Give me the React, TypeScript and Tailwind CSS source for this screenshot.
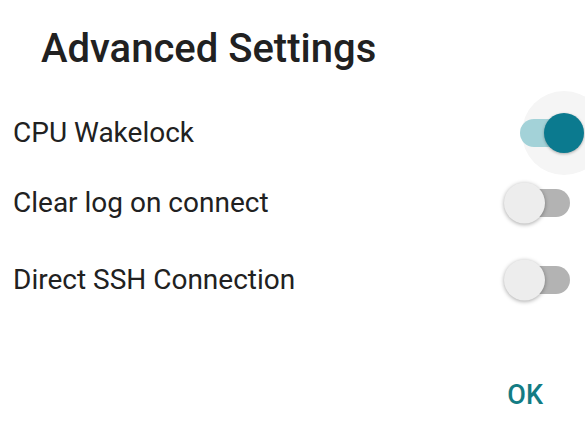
import { useState } from "react";

type SwitchProps = {
    checked: boolean;
    onChange: () => void;
};

const Switch: React.FC<SwitchProps> = ({ checked, onChange }) => {
    return (
        <button
            type="button"
            onClick={onChange}
            className="relative w-[50px] h-[28px] shrink-0"
        >
            {checked && (
                <div className="absolute left-[2px] top-1/2 -translate-y-1/2 w-[84px] h-[84px] rounded-full bg-[#f5f5f5]" />
            )}
            <div
                className={
                    checked
                        ? "absolute inset-0 rounded-full bg-[#a3d2d8]"
                        : "absolute inset-0 rounded-full bg-[#b3b3b3]"
                }
            />
            <div
                className={
                    checked
                        ? "absolute left-[24px] top-1/2 -translate-y-1/2 w-[40px] h-[40px] rounded-full bg-[#0b7a8f] shadow-[0_1px_3px_rgba(0,0,0,0.3)]"
                        : "absolute left-[-16px] top-1/2 -translate-y-1/2 w-[41px] h-[41px] rounded-full bg-[#ededed] shadow-[0_1px_4px_rgba(0,0,0,0.35)]"
                }
            />
        </button>
    );
};

export default function App() {
    const [cpu, setCpu] = useState(true);
    const [clearLog, setClearLog] = useState(false);
    const [directSsh, setDirectSsh] = useState(false);

    const rows = [
        { label: "CPU Wakelock", value: cpu, toggle: () => setCpu(!cpu), cls: "h-[68px] mt-[31px]" },
        { label: "Clear log on connect", value: clearLog, toggle: () => setClearLog(!clearLog), cls: "h-[68px] mt-[2px]" },
        { label: "Direct SSH Connection", value: directSsh, toggle: () => setDirectSsh(!directSsh), cls: "h-[68px] mt-[9px]" },
    ];

    return (
        <div
            className="w-[585px] h-[442px] bg-white overflow-hidden flex flex-col text-[#212121]"
            style={{ fontFamily: "Roboto, 'Noto Sans', sans-serif" }}
        >
            <h1 className="pl-[41px] pt-[25px] h-[68px] text-[40px] leading-[48px] font-medium">
                Advanced Settings
            </h1>

            {rows.map((row) => (
                <div key={row.label} className={`flex items-center justify-between pl-[13px] pr-[15px] ${row.cls}`}>
                    <span className="text-[28px] leading-none">{row.label}</span>
                    <Switch checked={row.value} onChange={row.toggle} />
                </div>
            ))}

            <div className="flex justify-end pr-[42px] mt-[68px]">
                <button type="button" className="text-[27px] font-medium text-[#137c84] leading-none">
                    OK
                </button>
            </div>
        </div>
    );
}
